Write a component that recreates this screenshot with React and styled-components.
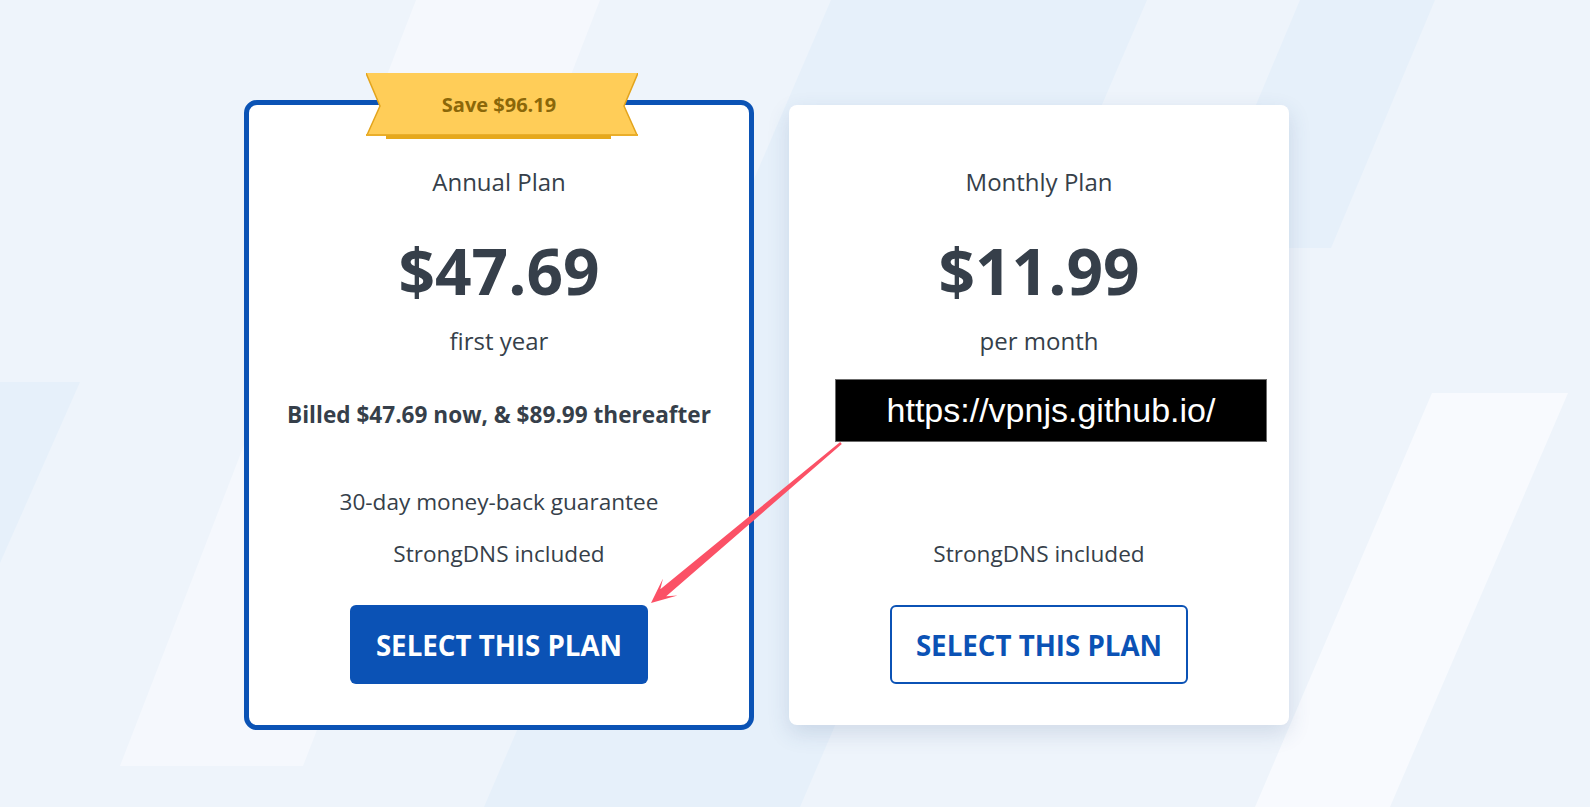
import React from "react";
import styled, { createGlobalStyle, css } from "styled-components";

const GlobalStyle = createGlobalStyle`
  html, body {
    margin: 0;
    padding: 0;
  }
  body {
    font-family: "Open Sans", "Noto Sans", sans-serif;
    -webkit-font-smoothing: antialiased;
  }
`;

const Page = styled.div`
  position: relative;
  width: 100%;
  height: 100vh;
  min-height: 807px;
  overflow: hidden;
  background: #eef4fb;
`;

const Backdrop = styled.svg`
  position: absolute;
  inset: 0;
  width: 100%;
  height: 100%;
  z-index: 0;
`;

const Overlay = styled.svg`
  position: absolute;
  inset: 0;
  width: 100%;
  height: 100%;
  z-index: 3;
  pointer-events: none;
`;

const Row = styled.div`
  position: relative;
  z-index: 1;
  display: flex;
  align-items: flex-start;
  justify-content: center;
  gap: 40px;
  padding: 105px 52px 0 0;
`;

const Card = styled.div`
  position: relative;
  box-sizing: border-box;
  width: 500px;
  height: 620px;
  padding-top: 61px;
  display: flex;
  flex-direction: column;
  align-items: center;
  text-align: center;
  background: #fff;
  color: #363f4a;
  border-radius: 8px;
  ${(p) =>
    p.featured
      ? css`
          width: 510px;
          height: 630px;
          margin: -5px;
          border: 5px solid #0b53b5;
          border-radius: 13px;
        `
      : css`
          box-shadow: 0 8px 22px rgba(52, 82, 130, 0.16);
        `}
`;

const Ribbon = styled.div`
  position: absolute;
  top: -32px;
  left: 117px;
  width: 272px;
  height: 66px;
  box-sizing: border-box;
  padding: 0 6px 4px 0;
  display: flex;
  align-items: center;
  justify-content: center;
  font-size: 20px;
  font-weight: 700;
  color: #8b6709;
  svg {
    position: absolute;
    inset: 0;
  }
  span {
    position: relative;
  }
`;

const Title = styled.div`
  font-size: 24px;
  line-height: 32px;
`;

const Price = styled.div`
  margin-top: 33px;
  font-size: 64px;
  font-weight: 700;
  line-height: 80px;
`;

const Term = styled.div`
  margin-top: 14px;
  font-size: 24px;
  line-height: 32px;
`;

const Billing = styled.div`
  margin-top: 42px;
  min-height: 32px;
  font-size: 22.6px;
  font-weight: 700;
  line-height: 32px;
`;

const Feature = styled.div`
  margin-top: ${(p) => p.gap}px;
  min-height: 32px;
  font-size: 22.6px;
  line-height: 32px;
`;

const SelectButton = styled.button`
  margin-top: 35px;
  width: 298px;
  height: 79px;
  box-sizing: border-box;
  border-radius: 6px;
  font-family: "Open Sans", sans-serif;
  font-size: 27.7px;
  font-weight: 700;
  cursor: pointer;
  ${(p) =>
    p.primary
      ? css`
          background: #0b52b5;
          color: #fff;
          border: none;
        `
      : css`
          background: #fff;
          color: #0b52b5;
          border: 2px solid #0b52b5;
        `}
`;

const UrlTag = styled.div`
  position: absolute;
  left: 46px;
  top: 274px;
  width: 432px;
  height: 63px;
  box-sizing: border-box;
  display: flex;
  align-items: center;
  justify-content: center;
  background: #000;
  border: 1px solid #6b6b6b;
  color: #fff;
  font-family: "Liberation Sans", Arial, sans-serif;
  font-size: 34px;
`;

const plans = [
  {
    name: "Annual Plan",
    price: "$47.69",
    term: "first year",
    billing: "Billed $47.69 now, & $89.99 thereafter",
    guarantee: "30-day money-back guarantee",
    dns: "StrongDNS included",
    featured: true,
    save: "Save $96.19",
  },
  {
    name: "Monthly Plan",
    price: "$11.99",
    term: "per month",
    billing: "",
    guarantee: "",
    dns: "StrongDNS included",
  },
];

const RibbonShape = () => (
  <svg width="272" height="66" viewBox="0 0 272 66">
    <rect x="20" y="60" width="225" height="6" fill="#e6a81c" />
    <polygon points="0,0 272,0 258,33 271,62 1,62 14,33" fill="#ffcd58" />
    <polyline points="0,0 14,33 1,62" fill="none" stroke="#e3a41c" strokeWidth="1.5" />
    <polyline points="272,0 258,33 271,62" fill="none" stroke="#e3a41c" strokeWidth="1.5" />
    <rect x="0" y="61" width="272" height="2" fill="#eaae2a" />
    <rect x="20" y="62" width="225" height="3.5" fill="#e6a81c" />
  </svg>
);

const PlanCard = ({ plan }) => (
  <Card featured={plan.featured}>
    {plan.save && (
      <Ribbon>
        <RibbonShape />
        <span>{plan.save}</span>
      </Ribbon>
    )}
    <Title>{plan.name}</Title>
    <Price>{plan.price}</Price>
    <Term>{plan.term}</Term>
    <Billing>{plan.billing}</Billing>
    <Feature gap={55}>{plan.guarantee}</Feature>
    <Feature gap={20}>{plan.dns}</Feature>
    <SelectButton primary={plan.featured}>SELECT THIS PLAN</SelectButton>
    {!plan.featured && <UrlTag>https://vpnjs.github.io/</UrlTag>}
  </Card>
);

const App = () => {
  return (
    <Page>
      <GlobalStyle />
      <Backdrop viewBox="0 0 1590 807" preserveAspectRatio="none">
        <polygon points="416,0 600,0 303,766 120,766" fill="#f5f8fd" />
        <polygon points="-40,382 80,382 0,563 -40,563" fill="#e6f0fa" />
        <polygon points="831,0 1147,0 800,807 484,807" fill="#e6f0fa" />
        <polygon points="1300,0 1435,0 1331,248 1196,248" fill="#e6f0fa" />
        <polygon points="1432,393 1568,393 1390,807 1255,807" fill="#f8fafe" />
      </Backdrop>
      <Row>
        {plans.map((plan) => (
          <PlanCard key={plan.name} plan={plan} />
        ))}
      </Row>
      <Overlay viewBox="0 0 1590 807" preserveAspectRatio="none">
        <polygon
          points="841.8,444 666.2,596.2 677.5,595.5 651,603 663,578.5 660.3,589.3 840.2,442"
          fill="#fb5166"
        />
      </Overlay>
    </Page>
  );
};

export default App;
